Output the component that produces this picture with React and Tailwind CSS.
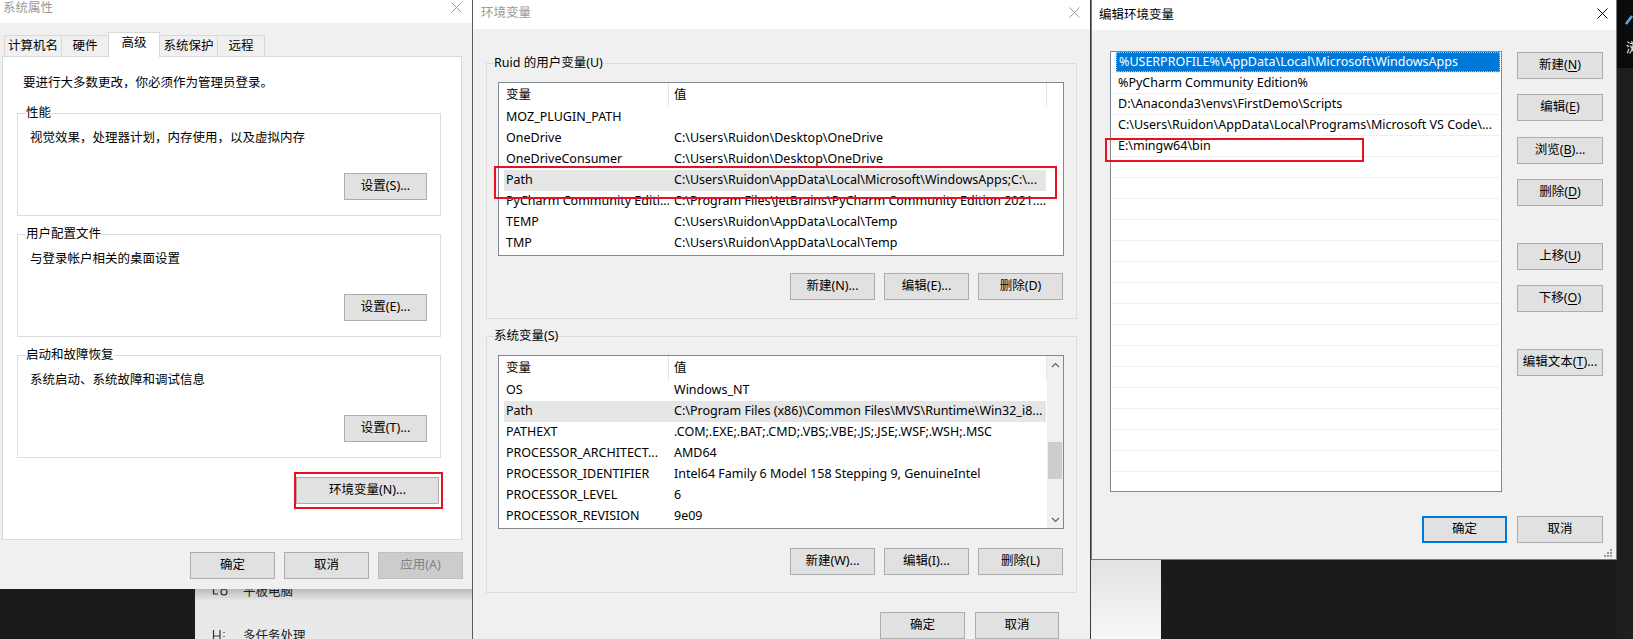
import React from 'react';

// three overlapping Win10 dialogs: 系统属性 / 环境变量 / 编辑环境变量

const userVars = [
  ['MOZ_PLUGIN_PATH', ''],
  ['OneDrive', 'C:\\Users\\Ruidon\\Desktop\\OneDrive'],
  ['OneDriveConsumer', 'C:\\Users\\Ruidon\\Desktop\\OneDrive'],
  ['Path', 'C:\\Users\\Ruidon\\AppData\\Local\\Microsoft\\WindowsApps;C:\\...', true],
  ['PyCharm Community Editi...', 'C:\\Program Files\\JetBrains\\PyCharm Community Edition 2021....'],
  ['TEMP', 'C:\\Users\\Ruidon\\AppData\\Local\\Temp'],
  ['TMP', 'C:\\Users\\Ruidon\\AppData\\Local\\Temp'],
];

const sysVars = [
  ['OS', 'Windows_NT'],
  ['Path', 'C:\\Program Files (x86)\\Common Files\\MVS\\Runtime\\Win32_i8...', true],
  ['PATHEXT', '.COM;.EXE;.BAT;.CMD;.VBS;.VBE;.JS;.JSE;.WSF;.WSH;.MSC'],
  ['PROCESSOR_ARCHITECT...', 'AMD64'],
  ['PROCESSOR_IDENTIFIER', 'Intel64 Family 6 Model 158 Stepping 9, GenuineIntel'],
  ['PROCESSOR_LEVEL', '6'],
  ['PROCESSOR_REVISION', '9e09'],
];

const pathEntries = [
  '%USERPROFILE%\\AppData\\Local\\Microsoft\\WindowsApps',
  '%PyCharm Community Edition%',
  'D:\\Anaconda3\\envs\\FirstDemo\\Scripts',
  'C:\\Users\\Ruidon\\AppData\\Local\\Programs\\Microsoft VS Code\\...',
  'E:\\mingw64\\bin',
  ...Array(16).fill(''),
];

const CloseX = ({ color, className = '' }) => (
  <svg width="11" height="11" viewBox="0 0 11 11" className={className}>
    <path d="M0.5 0.5L10.5 10.5M10.5 0.5L0.5 10.5" stroke={color} strokeWidth="1" />
  </svg>
);

const Chevron = ({ down }) => (
  <svg width="9" height="6" viewBox="0 0 9 6">
    <path d={down ? 'M1 1L4.5 4.5L8 1' : 'M1 5L4.5 1.5L8 5'} stroke="#606060" strokeWidth="1.2" fill="none" />
  </svg>
);

const Btn = ({ w = 'w-[85px]', className = '', disabled, children }) => (
  <div
    className={`flex h-[27px] shrink-0 items-center justify-center border ${w} ${
      disabled ? 'border-[#bfbfbf] bg-[#cccccc] text-[#838383]' : 'border-[#adadad] bg-[#e1e1e1] text-black'
    } ${className}`}
  >
    {children}
  </div>
);

const Group = ({ label, desc, btn, className = '' }) => (
  <fieldset className={`ml-[14px] w-[424px] border border-[#dcdcdc] px-[8px] pb-[15px] ${className}`}>
    <legend className="leading-[16px]">{label}</legend>
    <div className="mt-[9px] pl-[4px] leading-[16px]">{desc}</div>
    <div className="mt-[27px] flex justify-end pr-[5px]">
      <Btn w="w-[83px]">{btn}</Btn>
    </div>
  </fieldset>
);

const Tab = ({ w, active, children }) => (
  <div
    className={`-ml-px flex items-center justify-center border-l border-r border-t border-[#d9d9d9] first:ml-0 ${w} ${
      active ? 'relative z-10 mb-[-1px] h-[25px] bg-white pb-[3px]' : 'h-[21px] bg-[#f0f0f0]'
    }`}
  >
    {children}
  </div>
);

function SystemProps() {
  return (
    <div className="flex w-[472px] shrink-0 flex-col">
      <div className="flex h-[589px] flex-col bg-[#f0f0f0]">
        <div className="flex h-[23px] items-start justify-between bg-white pl-[3px] pr-[10px]">
          <span className="leading-[16px] text-[#999999]">系统属性</span>
          <CloseX color="#999999" className="mt-[2px]" />
        </div>
        <div className="mt-[9px] flex h-[24px] items-end pl-[4px]">
          <Tab w="w-[58px]">计算机名</Tab>
          <Tab w="w-[48px]">硬件</Tab>
          <Tab w="w-[52px]" active>高级</Tab>
          <Tab w="w-[59px]">系统保护</Tab>
          <Tab w="w-[48px]">远程</Tab>
        </div>
        <div className="ml-[2px] flex h-[484px] w-[460px] flex-col border border-[#d9d9d9] bg-white">
          <div className="mt-[18px] pl-[20px] leading-[16px]">要进行大多数更改，你必须作为管理员登录。</div>
          <Group className="mt-[14px]" label="性能" desc="视觉效果，处理器计划，内存使用，以及虚拟内存" btn="设置(S)..." />
          <Group className="mt-[10px]" label="用户配置文件" desc="与登录帐户相关的桌面设置" btn="设置(E)..." />
          <Group className="mt-[10px]" label="启动和故障恢复" desc="系统启动、系统故障和调试信息" btn="设置(T)..." />
          <div className="mr-[18px] mt-[14px] flex justify-end">
            <div className="border-2 border-[#e81123] pb-[3px] pr-[2px] pt-[3px]">
              <Btn w="w-[143px]">环境变量(N)...</Btn>
            </div>
          </div>
        </div>
        <div className="mt-[12px] flex justify-end gap-[9px] pr-[9px]">
          <Btn>确定</Btn>
          <Btn>取消</Btn>
          <Btn disabled>应用(A)</Btn>
        </div>
      </div>
      <div className="flex h-[50px]">
        <div className="w-[195px] bg-[#1a1b1d]" />
        <div className="relative flex flex-1 flex-col overflow-hidden bg-[#e9e9e9] pl-[17px]">
          <div className="-mt-[5px] flex h-[16px] items-center">
            <svg width="16" height="14" viewBox="0 0 16 14">
              <path d="M6 2H1.5V9H6M9 7a3 3 0 1 0 6 0a3 3 0 1 0 -6 0" stroke="#333" strokeWidth="1.2" fill="none" />
            </svg>
            <span className="ml-[15px] leading-[16px] text-[#222]">平板电脑</span>
          </div>
          <div className="mt-[28px] flex h-[16px] items-center">
            <svg width="16" height="14" viewBox="0 0 16 14">
              <path d="M1.5 1V13M1.5 7H8M8 1V13M12 3V4M12 7V8M12 11V12" stroke="#333" strokeWidth="1.2" fill="none" />
            </svg>
            <span className="ml-[15px] leading-[16px] text-[#222]">多任务处理</span>
          </div>
          <div className="absolute left-0 right-0 top-0 h-[12px] bg-linear-to-b from-[#00000033] to-transparent" />
        </div>
      </div>
    </div>
  );
}

function VarList({ rows, scroll }) {
  return (
    <div className="flex h-[174px] w-[566px] overflow-hidden border border-[#828790] bg-white">
      <div className="flex w-[548px] flex-col">
        <div className="flex h-[24px] shrink-0 items-center">
          <div className="h-full w-[170px] border-r border-[#e5e5e5] pl-[7px] leading-[24px]">变量</div>
          <div className="h-full flex-1 border-r border-[#e5e5e5] pl-[5px] leading-[24px]">值</div>
        </div>
        {rows.map(([name, value, hl]) => (
          <div
            key={name}
            className={`ml-[5px] flex h-[21px] w-[542px] shrink-0 items-center whitespace-nowrap ${hl ? 'bg-[#e5e5e5]' : ''}`}
          >
            <div className="w-[165px] overflow-hidden pl-[2px]">{name}</div>
            <div className="flex-1 overflow-hidden pl-[5px]">{value}</div>
          </div>
        ))}
      </div>
      {scroll ? (
        <div className="flex w-[16px] flex-col bg-[#f0f0f0]">
          <div className="flex h-[17px] items-center justify-center">
            <Chevron />
          </div>
          <div className="mx-[1px] mt-[69px] h-[37px] bg-[#cdcdcd]" />
          <div className="flex-1" />
          <div className="flex h-[17px] items-center justify-center">
            <Chevron down />
          </div>
        </div>
      ) : (
        <div className="w-[16px]" />
      )}
    </div>
  );
}

function EnvVars() {
  return (
    <div className="flex h-[639px] w-[619px] shrink-0 flex-col overflow-hidden border-l border-r border-l-[#5a5a5a] border-r-[#3a3a3a] bg-[#f0f0f0]">
      <div className="flex h-[29px] shrink-0 items-start justify-between bg-white pl-[8px] pr-[10px] pt-[5px]">
        <span className="leading-[16px] text-[#999999]">环境变量</span>
        <CloseX color="#999999" className="mt-[2px]" />
      </div>
      <fieldset className="ml-[13px] mt-[26px] w-[591px] border border-[#dcdcdc] pb-[18px] pl-[7px]">
        <legend className="leading-[16px]">Ruid 的用户变量(U)</legend>
        <div className="relative ml-[4px] mt-[11px]">
          <VarList rows={userVars} />
          <div className="absolute left-[-4px] top-[84px] h-[33px] w-[563px] border-2 border-[#e81123]" />
        </div>
        <div className="mt-[17px] flex justify-end gap-[9px] pr-[13px]">
          <Btn>新建(N)...</Btn>
          <Btn>编辑(E)...</Btn>
          <Btn>删除(D)</Btn>
        </div>
      </fieldset>
      <fieldset className="ml-[13px] mt-[9px] w-[591px] border border-[#dcdcdc] pb-[17px] pl-[7px]">
        <legend className="leading-[16px]">系统变量(S)</legend>
        <div className="ml-[4px] mt-[11px]">
          <VarList rows={sysVars} scroll />
        </div>
        <div className="mt-[19px] flex justify-end gap-[9px] pr-[13px]">
          <Btn>新建(W)...</Btn>
          <Btn>编辑(I)...</Btn>
          <Btn>删除(L)</Btn>
        </div>
      </fieldset>
      <div className="mt-[19px] flex justify-end gap-[10px] pr-[31px]">
        <Btn>确定</Btn>
        <Btn w="w-[84px]">取消</Btn>
      </div>
    </div>
  );
}

const Key = ({ children }) => <span className="underline underline-offset-2">{children}</span>;

function EditPath() {
  return (
    <div className="flex w-[526px] shrink-0 flex-col">
      <div className="flex h-[560px] flex-col border-b border-l border-r border-[#7a7a7a] bg-[#f0f0f0]">
        <div className="flex h-[30px] shrink-0 items-start justify-between bg-white pl-[7px] pr-[8px] pt-[7px]">
          <span className="leading-[16px] text-black">编辑环境变量</span>
          <CloseX color="#000000" className="mt-[1px]" />
        </div>
        <div className="flex pl-[18px] pt-[21px]">
          <div className="relative h-[441px] w-[392px]">
            <div className="flex h-full w-full flex-col overflow-hidden border border-[#828790] bg-white">
              {pathEntries.map((p, i) => (
                <div key={i} className="mx-[1px] flex h-[21px] shrink-0 border-b border-[#f0f0f0]">
                  <div
                    className={`ml-[4px] flex flex-1 items-center whitespace-nowrap pl-[2px] ${
                      i === 0 ? 'border border-dotted border-[#9cc7ef] bg-[#0078d7] text-white' : 'text-black'
                    }`}
                  >
                    {p}
                  </div>
                </div>
              ))}
            </div>
            <div className="absolute left-[-5px] top-[87px] h-[24px] w-[259px] border-2 border-[#e81123]" />
          </div>
          <div className="ml-[15px] mt-[1px] flex w-[86px] flex-col">
            <Btn w="w-[86px]">新建(<Key>N</Key>)</Btn>
            <Btn w="w-[86px]" className="mt-[15px]">编辑(<Key>E</Key>)</Btn>
            <Btn w="w-[86px]" className="mt-[16px]">浏览(<Key>B</Key>)...</Btn>
            <Btn w="w-[86px]" className="mt-[15px]">删除(<Key>D</Key>)</Btn>
            <Btn w="w-[86px]" className="mt-[37px]">上移(<Key>U</Key>)</Btn>
            <Btn w="w-[86px]" className="mt-[15px]">下移(<Key>O</Key>)</Btn>
            <Btn w="w-[86px]" className="mt-[37px]">编辑文本(<Key>T</Key>)...</Btn>
          </div>
        </div>
        <div className="mt-[24px] flex justify-end gap-[10px] pr-[13px]">
          <div className="flex h-[27px] w-[85px] items-center justify-center border-2 border-[#0078d7] bg-[#e1e1e1]">确定</div>
          <Btn w="w-[86px]">取消</Btn>
        </div>
        <div className="mt-[5px] flex justify-end pr-[3px]">
          <svg width="10" height="10" viewBox="0 0 10 10" fill="#9a9a9a">
            <rect x="7" y="1" width="2" height="2" />
            <rect x="4" y="4" width="2" height="2" />
            <rect x="7" y="4" width="2" height="2" />
            <rect x="1" y="7" width="2" height="2" />
            <rect x="4" y="7" width="2" height="2" />
            <rect x="7" y="7" width="2" height="2" />
          </svg>
        </div>
      </div>
      <div className="flex flex-1">
        <div className="w-[70px] bg-linear-to-b from-[#e2e2e2] to-[#f7f7f7]" />
        <div className="flex-1 bg-[#1a1b1d]" />
      </div>
    </div>
  );
}

export default function App() {
  return (
    <div className="flex h-[639px] w-[1633px] overflow-hidden bg-[#1a1b1d] font-['Noto_Sans','Noto_Sans_CJK_SC',sans-serif] text-[12.5px] text-black">
      <SystemProps />
      <EnvVars />
      <EditPath />
      <div className="flex w-[16px] shrink-0 flex-col overflow-hidden">
        <div className="flex h-[68px] flex-col bg-[#0b0b0b]">
          <svg width="16" height="14" viewBox="0 0 16 14" className="ml-[7px] mt-[12px]">
            <path d="M2 12L8 4" stroke="#5aa9e6" strokeWidth="2.5" />
          </svg>
          <div className="mt-[14px] flex items-center">
            <div className="h-[12px] w-[2px] bg-[#d9a300]" />
            <span className="ml-[9px] text-[13px] leading-[14px] text-white">浏</span>
          </div>
        </div>
        <div className="flex-1 bg-[#1e1e1e]" />
      </div>
    </div>
  );
}
